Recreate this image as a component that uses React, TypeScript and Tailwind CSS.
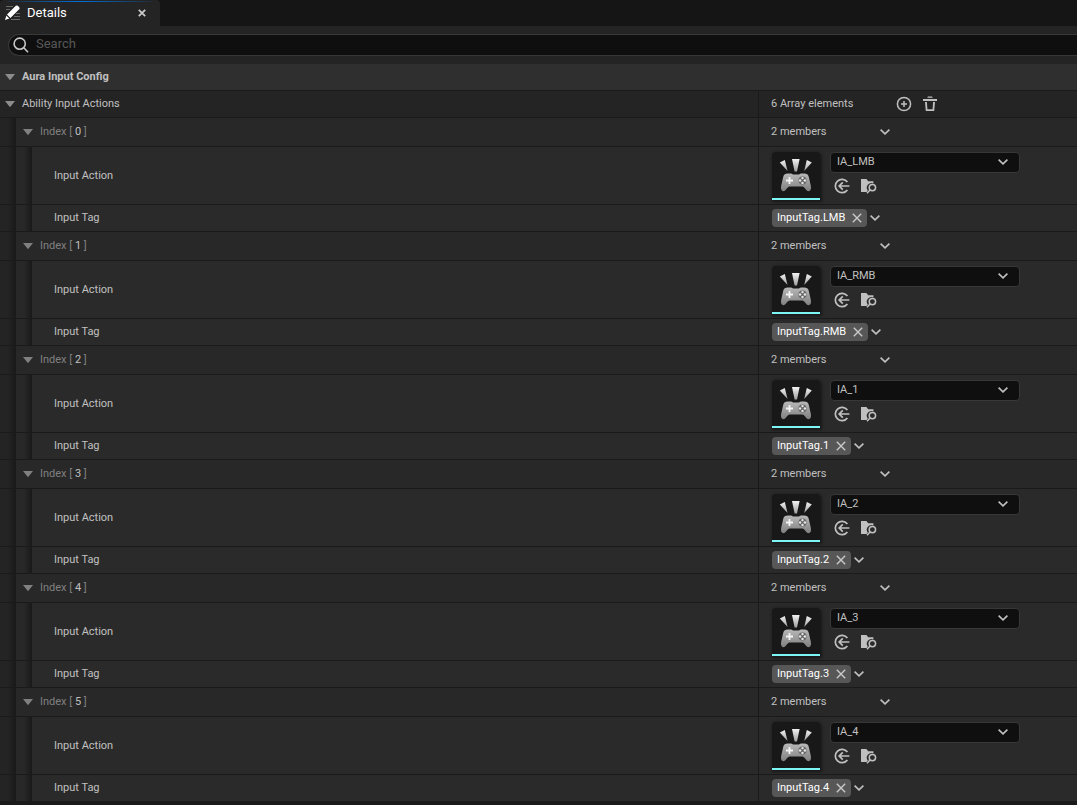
import React, { useState } from 'react';

const entries = [
  { action: 'IA_LMB', tag: 'InputTag.LMB' },
  { action: 'IA_RMB', tag: 'InputTag.RMB' },
  { action: 'IA_1', tag: 'InputTag.1' },
  { action: 'IA_2', tag: 'InputTag.2' },
  { action: 'IA_3', tag: 'InputTag.3' },
  { action: 'IA_4', tag: 'InputTag.4' },
];

function Chevron() {
  return (
    <svg width="10" height="6" viewBox="0 0 10 6" fill="none" stroke="#c0c0c0" strokeWidth="1.6">
      <path d="M.6.6 5 4.9 9.4.6" />
    </svg>
  );
}

function ExpandArrow({ label, dim = false }: { label: string; dim?: boolean }) {
  return (
    <button type="button" aria-label={label} className="flex h-4 w-3 shrink-0 items-center justify-center">
      <svg width="10" height="6" viewBox="0 0 10 6" fill={dim ? '#808080' : '#8c8c8c'}>
        <path d="M0 0h10L5.6 5.6q-.6.6-1.2 0z" />
      </svg>
    </button>
  );
}

function PencilIcon() {
  return (
    <svg width="16" height="16" viewBox="0 0 16 16" fill="none">
      <path d="M1 1.5h7M1 4.5h4M11 8.5h4M9 11.5h6M6 14.5h9" stroke="#6a6a6a" strokeWidth="1" />
      <path d="M0 15 1.4 10.6 4.4 13.6z" fill="#fff" />
      <path d="M2 9.6 10.8.8q1-.8 2 0l1.4 1.4q1 1 0 2L5.4 13z" fill="#fff" />
      <path d="m1.6 10 3.4 3.4" stroke="#242424" strokeWidth=".6" />
    </svg>
  );
}

function SearchIcon() {
  return (
    <svg width="16" height="16" viewBox="0 0 16 16" fill="none" stroke="#c8c8c8" strokeWidth="1.6">
      <circle cx="6.7" cy="6.7" r="5.6" />
      <path d="m10.8 10.8 4.2 4.4" />
    </svg>
  );
}

function AddIcon() {
  return (
    <svg width="16" height="16" viewBox="0 0 16 16" fill="none" stroke="#c0c0c0" strokeWidth="1.5">
      <circle cx="8" cy="8" r="6.6" />
      <path d="M8 5v6M5 8h6" />
    </svg>
  );
}

function TrashIcon() {
  return (
    <svg width="14" height="16" viewBox="0 0 14 16" fill="#c0c0c0">
      <path d="M5 .4h4l.8 1.4H4.2zM0 3h14v2H0z" />
      <path d="M2 6h1.9l.5 7.200h5.200l.5-7.200H12l-.8 9H2.800z" />
    </svg>
  );
}

function UseSelectedIcon() {
  return (
    <svg width="16" height="16" viewBox="0 0 16 16" fill="none" stroke="#c0c0c0" strokeWidth="1.7">
      <path d="M13.400 4A6.700 6.700 0 1 0 13.400 12" />
      <path d="M15.400 8H5M8.800 4.400 5.200 8l3.600 3.600" />
    </svg>
  );
}

function BrowseIcon() {
  return (
    <svg width="17" height="16" viewBox="0 0 17 16" fill="none">
      <path d="M1 1h5.4l1.8 2.2h5.2v2.4a4.6 4.6 0 0 0-5.6 7L6.6 14H1z" fill="#c0c0c0" />
      <circle cx="12.4" cy="9.6" r="3.2" stroke="#c0c0c0" strokeWidth="1.5" />
      <path d="m10 12-3 3.2" stroke="#c0c0c0" strokeWidth="1.5" />
    </svg>
  );
}

function Thumbnail({ id }: { id: number }) {
  const beam = `beam-${id}`;
  const pad = `pad-${id}`;
  return (
    <div className="h-12 w-12 shrink-0 rounded-t border-b-2 border-[#7ef5f5] bg-[#181818] shadow-[1px_1px_3px_1px_#191919]">
      <svg width="48" height="46" viewBox="0 0 48 46">
        <defs>
          <linearGradient id={beam} x1="0" y1="0" x2="0" y2="1">
            <stop offset="0" stopColor="#f2f2f2" />
            <stop offset="1" stopColor="#a0a0a0" />
          </linearGradient>
          <linearGradient id={pad} x1="0" y1="0" x2="0" y2="1">
            <stop offset="0" stopColor="#b8b8b8" />
            <stop offset="1" stopColor="#808080" />
          </linearGradient>
        </defs>
        <g fill={`url(#${beam})`}>
          <path d="M7.800 10.500 12.800 8l2.800 11z" />
          <path d="M20 7h7.600L25 19.400h-2.400z" />
          <path d="m34.800 8 5 2.500-7.600 8.500z" />
        </g>
        <path
          d="M15.6 21.600h3q1.400 0 2.400.8h6q1-.8 2.400-.8h3c2.200 0 3.800 1 4.400 3.400l2 8.800c.8 3.600-.4 5.400-2.200 5.400-2.600 0-4-4.600-6.200-4.600H17.600c-2.200 0-3.800 4.600-6.200 4.600-1.800 0-3-1.800-2.200-5.400l2-8.800c.6-2.400 2.200-3.400 4.400-3.400z"
          fill={`url(#${pad})`}
        />
        <path d="M17.5 25v7M14 28.500h7" stroke="#f4f4f4" strokeWidth="1.8" />
        <circle cx="30.5" cy="28.500" r="4" fill="#666" />
        <g fill="#e8e8e8">
          <circle cx="30.5" cy="26.100" r="1.200" />
          <circle cx="30.5" cy="30.900" r="1.200" />
          <circle cx="28.1" cy="28.500" r="1.200" />
          <circle cx="32.9" cy="28.500" r="1.200" />
        </g>
      </svg>
    </div>
  );
}

function IndentGutter() {
  return <div className="w-4 shrink-0 bg-linear-to-r from-transparent from-50% to-[#191919]" />;
}

function ValueCell({ children }: { children: React.ReactNode }) {
  return (
    <div className="flex w-[319px] shrink-0 items-center border-l border-[#1a1a1a] pl-3">{children}</div>
  );
}

function ArrayEntry({ index, action, tag }: { index: number; action: string; tag: string }) {
  const [value, setValue] = useState(action);

  return (
    <section>
      <div className="flex h-[29px] border-b border-[#1a1a1a] bg-[#242424]">
        <IndentGutter />
        <div className="flex grow bg-[#282828]">
          <div className="flex grow items-center gap-1.5 pl-1.5 text-[#808080]">
            <ExpandArrow label={`Collapse index ${index}`} dim />
            <span>
              Index [ <span className="text-[#c0c0c0]">{index}</span> ]
            </span>
          </div>
          <ValueCell>
            <span className="w-[109px]">2 members</span>
            <button type="button" aria-label={`Options for index ${index}`}>
              <Chevron />
            </button>
          </ValueCell>
        </div>
      </div>

      <div className="flex h-[58px] border-b border-[#1a1a1a] bg-[#242424]">
        <IndentGutter />
        <div className="flex grow bg-[#282828]">
          <IndentGutter />
          <div className="flex grow bg-[#2a2a2a]">
            <label htmlFor={`action-${index}`} className="flex grow items-center pl-[22px]">
              Input Action
            </label>
            <ValueCell>
              <div className="flex gap-2.5 pl-px">
                <Thumbnail id={index} />
                <div className="flex flex-col gap-[5px]">
                  <div className="relative">
                    <select
                      id={`action-${index}`}
                      value={value}
                      onChange={(e) => setValue(e.target.value)}
                      className="block h-[21px] w-[190px] appearance-none rounded border border-[#383838] bg-[#0f0f0f] pl-1.5 outline-none"
                    >
                      {entries.map((entry) => (
                        <option key={entry.action}>{entry.action}</option>
                      ))}
                    </select>
                    <span className="pointer-events-none absolute inset-y-0 right-3 flex items-center">
                      <Chevron />
                    </span>
                  </div>
                  <div className="flex gap-2.5 pl-1">
                    <button type="button" aria-label="Use selected asset">
                      <UseSelectedIcon />
                    </button>
                    <button type="button" aria-label="Browse to asset">
                      <BrowseIcon />
                    </button>
                  </div>
                </div>
              </div>
            </ValueCell>
          </div>
        </div>
      </div>

      <div className="flex h-[27px] border-b border-[#1a1a1a] bg-[#242424]">
        <IndentGutter />
        <div className="flex grow bg-[#282828]">
          <IndentGutter />
          <div className="flex grow bg-[#2a2a2a]">
            <div className="flex grow items-center pl-[22px]">Input Tag</div>
            <ValueCell>
              <div className="flex items-center gap-[3px] pl-px">
                <div className="flex h-[18px] items-center gap-[7px] rounded-sm bg-[#575757] px-[5px] text-white">
                  {tag}
                  <button type="button" aria-label={`Remove ${tag}`}>
                    <svg width="10" height="10" viewBox="0 0 10 10" stroke="#c8c8c8" strokeWidth="1.4">
                      <path d="m.8.8 8.4 8.4M9.2.8.8 9.2" />
                    </svg>
                  </button>
                </div>
                <button type="button" aria-label="Choose tag">
                  <Chevron />
                </button>
              </div>
            </ValueCell>
          </div>
        </div>
      </div>
    </section>
  );
}

export default function App() {
  return (
    <div className="min-h-screen bg-[#1a1a1a] font-[Roboto,'Liberation_Sans',sans-serif] text-[11px] leading-4 text-[#c0c0c0]">
      <header className="flex h-[26px] bg-[#151515]">
        <div className="flex w-40 flex-col rounded-t bg-[#242424] pt-px">
          <div className="mx-2 h-px shrink-0 bg-linear-to-r from-[#0070e0]/10 via-[#0070e0] to-[#0070e0]/10" />
          <div className="flex grow items-center pr-3 pb-0.5 pl-[5px]">
            <PencilIcon />
            <h1 className="grow pl-1.5 text-[13px] text-white">Details</h1>
            <button type="button" aria-label="Close tab" className="p-0.5">
              <svg width="8" height="8" viewBox="0 0 8 8" stroke="#c8c8c8" strokeWidth="1.8">
                <path d="m.8.8 6.4 6.4M7.2.8.8 7.2" />
              </svg>
            </button>
          </div>
        </div>
      </header>

      <div className="bg-[#242424] pt-2 pb-2 pl-2">
        <label className="flex h-[22px] items-center gap-[7px] rounded-l-full border border-r-0 border-[#383838] bg-[#0f0f0f] pl-1">
          <SearchIcon />
          <input
            type="text"
            aria-label="Search"
            placeholder="Search"
            className="grow bg-transparent pb-0.5 text-[13px] outline-none placeholder:text-[#575757]"
          />
        </label>
      </div>

      <main>
        <h2 className="flex h-[27px] items-center gap-1.5 border-b border-[#1a1a1a] bg-[#2f2f2f] pl-1 font-bold">
          <ExpandArrow label="Collapse Aura Input Config" />
          Aura Input Config
        </h2>
        <div className="flex h-[27px] border-b border-[#1a1a1a] bg-[#242424]">
          <div className="flex grow items-center gap-1.5 pl-1">
            <ExpandArrow label="Collapse Ability Input Actions" />
            Ability Input Actions
          </div>
          <ValueCell>
            <span className="w-[125px]">6 Array elements</span>
            <button type="button" aria-label="Add element" className="mr-[11px]">
              <AddIcon />
            </button>
            <button type="button" aria-label="Remove all elements">
              <TrashIcon />
            </button>
          </ValueCell>
        </div>
        {entries.map((entry, index) => (
          <ArrayEntry key={entry.tag} index={index} action={entry.action} tag={entry.tag} />
        ))}
      </main>
    </div>
  );
}
